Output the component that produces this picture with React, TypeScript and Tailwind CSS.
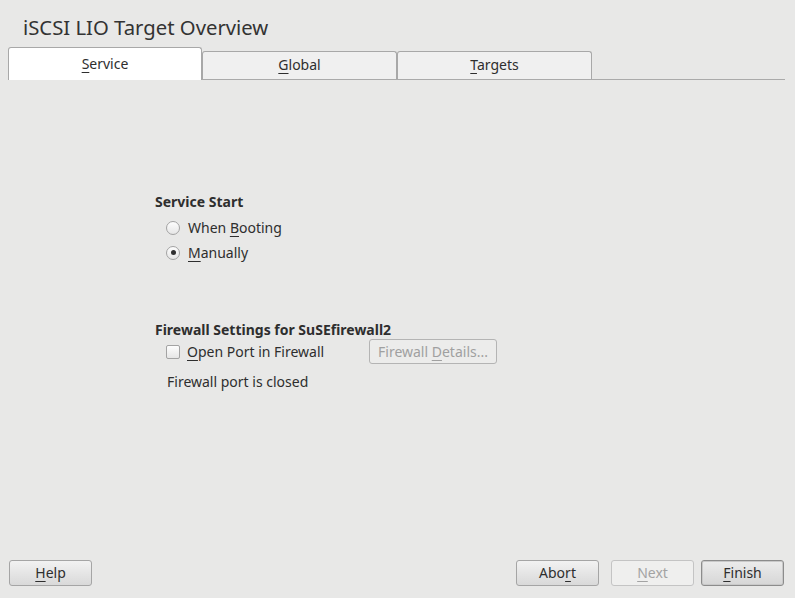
import React from 'react';

const font = { fontFamily: '"Noto Sans", "Open Sans", sans-serif' };

const Key: React.FC<{ children: React.ReactNode }> = ({ children }) => (
  <span className="underline underline-offset-[3px] decoration-1">{children}</span>
);

const Radio: React.FC<{ checked?: boolean }> = ({ checked }) => (
  <span className="w-[14px] h-[14px] rounded-full border border-[#a3a3a3] bg-gradient-to-b from-[#fdfdfd] to-[#e6e6e6] flex items-center justify-center shrink-0">
    {checked && <span className="w-[5px] h-[5px] rounded-full bg-[#303030]" />}
  </span>
);

type BtnProps = { children: React.ReactNode; disabled?: boolean; def?: boolean };

const Button: React.FC<BtnProps> = ({ children, disabled, def }) => {
  let cls = 'w-[83px] h-[26px] rounded-[3px] text-[14px] flex items-center justify-center pb-[2px] ';
  if (disabled) cls += 'border border-[#c4c4c4] bg-[#efefee] text-[#a3a3a3]';
  else if (def) cls += 'border border-[#8c8c8c] shadow-[inset_0_0_0_1px_#c9c9c9] bg-gradient-to-b from-[#ececec] to-[#d6d6d6] text-[#2e2e2e]';
  else cls += 'border border-[#a5a5a5] bg-gradient-to-b from-[#f2f2f2] to-[#d9d9d9] text-[#2e2e2e]';
  return <button className={cls}>{children}</button>;
};

export default function App() {
  return (
    <div style={font} className="w-[795px] h-[598px] bg-[#e8e8e7] text-[#2e2e2e] flex flex-col overflow-hidden">
      <h1 className="pt-[13px] pl-[23px] text-[20.3px] leading-[28px] text-[#333]">iSCSI LIO Target Overview</h1>

      <div className="mt-[6px] ml-[8px] w-[777px] h-[33px] flex items-end border-b border-[#aaaaaa]">
        <div className="w-[194px] h-[33px] -mb-px bg-white border border-b-0 border-[#a8a8a8] rounded-t-[3px] flex items-center justify-center text-[14px] pb-[2px]">
          <span><Key>S</Key>ervice</span>
        </div>
        <div className="w-[195px] h-[28px] bg-[#f0f0f0] border border-b-0 border-[#a8a8a8] rounded-t-[3px] flex items-center justify-center text-[14px] pb-[2px]">
          <span><Key>G</Key>lobal</span>
        </div>
        <div className="w-[195px] h-[28px] bg-[#f0f0f0] border border-b-0 border-[#a8a8a8] rounded-t-[3px] flex items-center justify-center text-[14px] pb-[2px]">
          <span><Key>T</Key>argets</span>
        </div>
      </div>

      <div className="pl-[155px] mt-[112px] text-[14px]">
        <div className="font-bold leading-[20px]">Service Start</div>
        <div className="mt-[3px] pl-[11px]">
          <div className="h-[25px] flex items-center gap-[8px]">
            <Radio />
            <span>When <Key>B</Key>ooting</span>
          </div>
          <div className="h-[25px] flex items-center gap-[8px]">
            <Radio checked />
            <span><Key>M</Key>anually</span>
          </div>
        </div>

        <div className="mt-[55px] font-bold leading-[20px]">Firewall Settings for SuSEfirewall2</div>
        <div className="-mt-px h-[25px] pl-[11px] flex items-center">
          <span className="w-[14px] h-[14px] rounded-[2px] border border-[#a3a3a3] bg-gradient-to-b from-[#fdfdfd] to-[#e6e6e6] shrink-0" />
          <span className="ml-[7px] w-[182px]"><Key>O</Key>pen Port in Firewall</span>
          <span className="w-[128px] h-[25px] rounded-[3px] border border-[#b4b4b4] bg-[#ececeb] text-[#a0a0a0] flex items-center justify-center pb-px">
            <span>Firewall <Key>D</Key>etails...</span>
          </span>
        </div>
        <div className="mt-[8px] pl-[12px] leading-[20px]">Firewall port is closed</div>
      </div>

      <div className="flex-1" />

      <div className="flex items-center pl-[9px] pr-[11px] pb-[12px]">
        <Button><Key>H</Key>elp</Button>
        <div className="flex-1" />
        <Button>Abo<Key>r</Key>t</Button>
        <div className="w-[12px]" />
        <Button disabled><Key>N</Key>ext</Button>
        <div className="w-[7px]" />
        <Button def><Key>F</Key>inish</Button>
      </div>
    </div>
  );
}
